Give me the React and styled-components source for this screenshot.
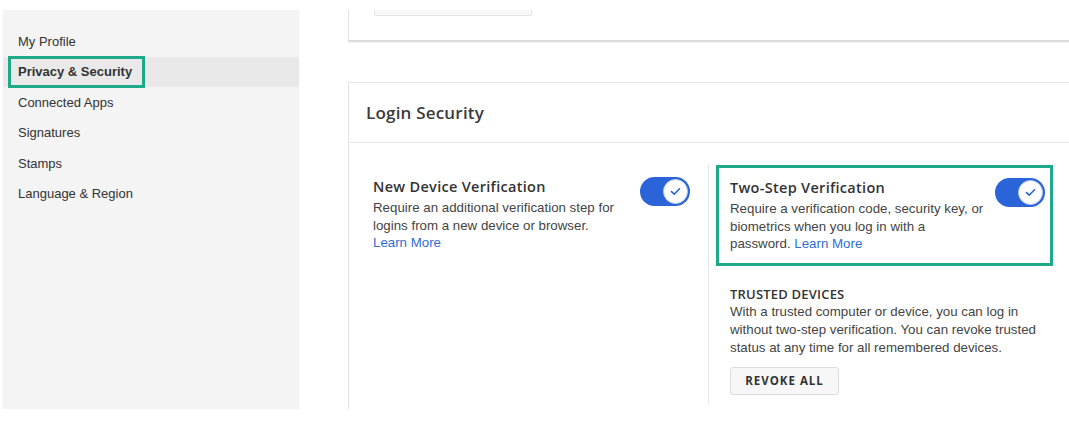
import React from 'react';
import styled, { createGlobalStyle } from 'styled-components';

const GlobalStyle = createGlobalStyle`
  html, body {
    margin: 0;
    background: #ffffff;
    overflow: hidden;
  }
  body {
    font-family: "Liberation Sans", Arial, sans-serif;
    color: #333;
  }
`;

const Page = styled.div`
  display: flex;
  align-items: flex-start;
  padding: 10px 0 0 3px;
  height: 399px;
  width: 1069px;
  box-sizing: content-box;
  overflow: hidden;
`;

const Sidebar = styled.nav`
  width: 296px;
  height: 399px;
  flex-shrink: 0;
  background: #f4f4f4;
  padding-top: 16px;
  box-sizing: border-box;
  box-shadow: 0 1px 2px rgba(0, 0, 0, 0.06);
`;

const NavItem = styled.div`
  height: 30.5px;
  display: flex;
  align-items: center;
  padding-left: ${p => (p.$active ? '5px' : '15px')};
  font-size: 13px;
  color: #333;
  background: ${p => (p.$active ? '#e9e9e9' : 'transparent')};
  font-weight: ${p => (p.$active ? 700 : 400)};
`;

const Highlight = styled.span`
  display: inline-block;
  border: 3px solid #1fa98b;
  padding: 5px 10px 5px 7px;
  line-height: 16px;
`;

const Main = styled.main`
  margin-left: 49px;
  width: 740px;
  flex-shrink: 0;
  display: flex;
  flex-direction: column;
  gap: 40px;
`;

const TopCard = styled.div`
  height: 32px;
  border-left: 1px solid #e2e2e2;
  border-bottom: 2px solid #dcdcdc;
  box-shadow: 0 1px 1px rgba(0, 0, 0, 0.04);
  box-sizing: border-box;
  padding-left: 25px;
`;

const StubButton = styled.div`
  width: 156px;
  height: 5px;
  background: #f8f8f8;
  border: 1px solid #e4e4e4;
  border-top: none;
  border-radius: 0 0 2px 2px;
`;

const Card = styled.section`
  border-top: 1px solid #e4e4e4;
  border-left: 1px solid #e2e2e2;
  height: 330px;
  box-sizing: border-box;
`;

const CardHeader = styled.header`
  height: 60px;
  display: flex;
  align-items: center;
  padding-left: 17px;
  border-bottom: 1px solid #e8e8e8;
  box-sizing: border-box;
  font-family: "Open Sans", "Noto Sans", sans-serif;
  font-size: 17px;
  font-weight: 600;
  letter-spacing: 0.2px;
  color: #3a3a3a;
`;

const CardBody = styled.div`
  display: flex;
  padding-top: 21px;
`;

const LeftCol = styled.div`
  width: 359px;
  flex-shrink: 0;
  padding: 14px 18px 0 24px;
  box-sizing: border-box;
`;

const Divider = styled.div`
  width: 1px;
  background: #e6e6e6;
  align-self: stretch;
`;

const RightCol = styled.div`
  flex: 1;
  padding: 1px 0 10px 7px;
`;

const Feature = styled.div`
  display: flex;
  justify-content: space-between;
  align-items: flex-start;
`;

const Annotated = styled.div`
  width: 337px;
  box-sizing: border-box;
  border: 3px solid #1fa98b;
  padding: 11px 5px 10px 11px;
`;

const FeatureText = styled.div`
  max-width: ${p => p.$w || '255px'};
`;

const Title = styled.div`
  font-family: "Open Sans", "Noto Sans", sans-serif;
  font-size: 14.5px;
  font-weight: 600;
  line-height: 18px;
  color: #333;
  letter-spacing: 0.3px;
  margin-bottom: 3px;
`;

const Desc = styled.p`
  margin: 0;
  font-size: 13.3px;
  line-height: 17.5px;
  color: #444;
`;

const Link = styled.a`
  color: #2f6ed6;
  text-decoration: none;
`;

const ToggleTrack = styled.div`
  width: 50px;
  height: 29px;
  border-radius: 15px;
  background: #2a64d8;
  flex-shrink: 0;
  display: flex;
  align-items: center;
  justify-content: flex-end;
  padding-right: 2px;
  box-sizing: border-box;
  margin-top: -1px;
`;

const Knob = styled.div`
  width: 25px;
  height: 25px;
  border-radius: 50%;
  background: #fff;
  box-sizing: border-box;
  border: 1px solid #b9cdf2;
  display: flex;
  align-items: center;
  justify-content: center;
`;

const Trusted = styled.div`
  padding: 19px 0 0 14px;
`;

const TrustedTitle = styled.div`
  font-family: "Open Sans", "Noto Sans", sans-serif;
  font-size: 13px;
  font-weight: 600;
  line-height: 18px;
  color: #333;
  text-transform: uppercase;
  letter-spacing: 0.2px;
`;

const TrustedText = styled.p`
  margin: 0;
  width: 320px;
  font-size: 13.3px;
  line-height: 18px;
  color: #444;
`;

const Button = styled.button`
  margin-top: 10px;
  height: 28px;
  width: 109px;
  background: #f7f7f7;
  border: 1px solid #dcdcdc;
  border-radius: 3px;
  font-family: "Open Sans", "Noto Sans", sans-serif;
  font-size: 11.5px;
  font-weight: 700;
  letter-spacing: 1px;
  color: #333;
  padding: 0;
`;

function Toggle() {
  return (
    <ToggleTrack>
      <Knob>
        <svg width="11" height="9" viewBox="0 0 11 9">
          <path d="M1.5 4.6 L4.2 7.2 L9.5 1.8" fill="none" stroke="#2a64d8" strokeWidth="1.6" strokeLinecap="round" strokeLinejoin="round" />
        </svg>
      </Knob>
    </ToggleTrack>
  );
}

const navItems = ['My Profile', 'Privacy & Security', 'Connected Apps', 'Signatures', 'Stamps', 'Language & Region'];

export default function App() {
  return (
    <>
      <GlobalStyle />
      <Page>
        <Sidebar>
          {navItems.map(item =>
            item === 'Privacy & Security' ? (
              <NavItem key={item} $active>
                <Highlight>{item}</Highlight>
              </NavItem>
            ) : (
              <NavItem key={item}>{item}</NavItem>
            )
          )}
        </Sidebar>
        <Main>
          <TopCard>
            <StubButton />
          </TopCard>
          <Card>
            <CardHeader>Login Security</CardHeader>
            <CardBody>
              <LeftCol>
                <Feature>
                  <FeatureText $w="250px">
                    <Title>New Device Verification</Title>
                    <Desc>
                      Require an additional verification step for logins from a new device or browser.
                      <br />
                      <Link href="#">Learn More</Link>
                    </Desc>
                  </FeatureText>
                  <Toggle />
                </Feature>
              </LeftCol>
              <Divider />
              <RightCol>
                <Annotated>
                  <Feature>
                    <FeatureText $w="258px">
                      <Title>Two-Step Verification</Title>
                      <Desc>
                        Require a verification code, security key, or biometrics when you log in with a
                        <br />
                        password. <Link href="#">Learn More</Link>
                      </Desc>
                    </FeatureText>
                    <Toggle />
                  </Feature>
                </Annotated>
                <Trusted>
                  <TrustedTitle>Trusted Devices</TrustedTitle>
                  <TrustedText>
                    With a trusted computer or device, you can log in without two-step verification. You can revoke
                    trusted status at any time for all remembered devices.
                  </TrustedText>
                  <Button>REVOKE ALL</Button>
                </Trusted>
              </RightCol>
            </CardBody>
          </Card>
        </Main>
      </Page>
    </>
  );
}
